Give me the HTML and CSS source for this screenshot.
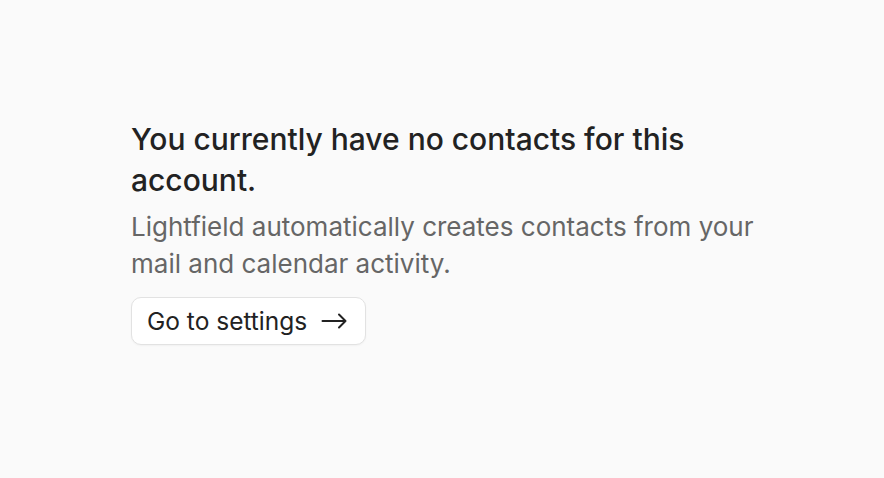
FILE: index.html
```html
<!DOCTYPE html>
<html>
<head>
<meta charset="utf-8">
<link rel="stylesheet" href="styles.css">
</head>
<body>
<main class="page">
  <section class="empty">
    <h1 class="title">You currently have no contacts for this account.</h1>
    <p class="desc">Lightfield automatically creates contacts from your mail and calendar activity.</p>
    <button class="btn">Go to settings
      <svg class="arrow" width="26" height="16" viewBox="0 0 26 16" fill="none" stroke="currentColor" stroke-width="2" stroke-linecap="round" stroke-linejoin="round"><path d="M1.5 8h23M18 1.5l6.5 6.5-6.5 6.5"/></svg>
    </button>
  </section>
</main>
</body>
</html>
```
FILE: styles.css
```css
html, body { margin: 0; padding: 0; }
body {
  background: #fafafa;
  font-family: Inter, "Noto Sans", sans-serif;
  color: #222222;
}
.page {
  height: 478px;
  box-sizing: border-box;
  padding: 119px 0 0 131px;
}
.empty {
  width: 640px;
  display: flex;
  flex-direction: column;
  align-items: flex-start;
}
.title {
  margin: 0;
  font-size: 30px;
  font-weight: 500;
  line-height: 41px;
  color: #222222;
}
.desc {
  margin: 7px 0 0 0;
  font-size: 26px;
  line-height: 37px;
  color: #666666;
}
.btn {
  margin-top: 15px;
  display: flex;
  align-items: center;
  gap: 14px;
  height: 48px;
  padding: 0 18px 0 15px;
  background: #ffffff;
  border: 1px solid #e2e2e2;
  border-radius: 10px;
  font-family: inherit;
  font-size: 24.5px;
  color: #222222;
  box-shadow: 0 1px 2px rgba(0,0,0,0.04);
}
.arrow { display: block; }
```
